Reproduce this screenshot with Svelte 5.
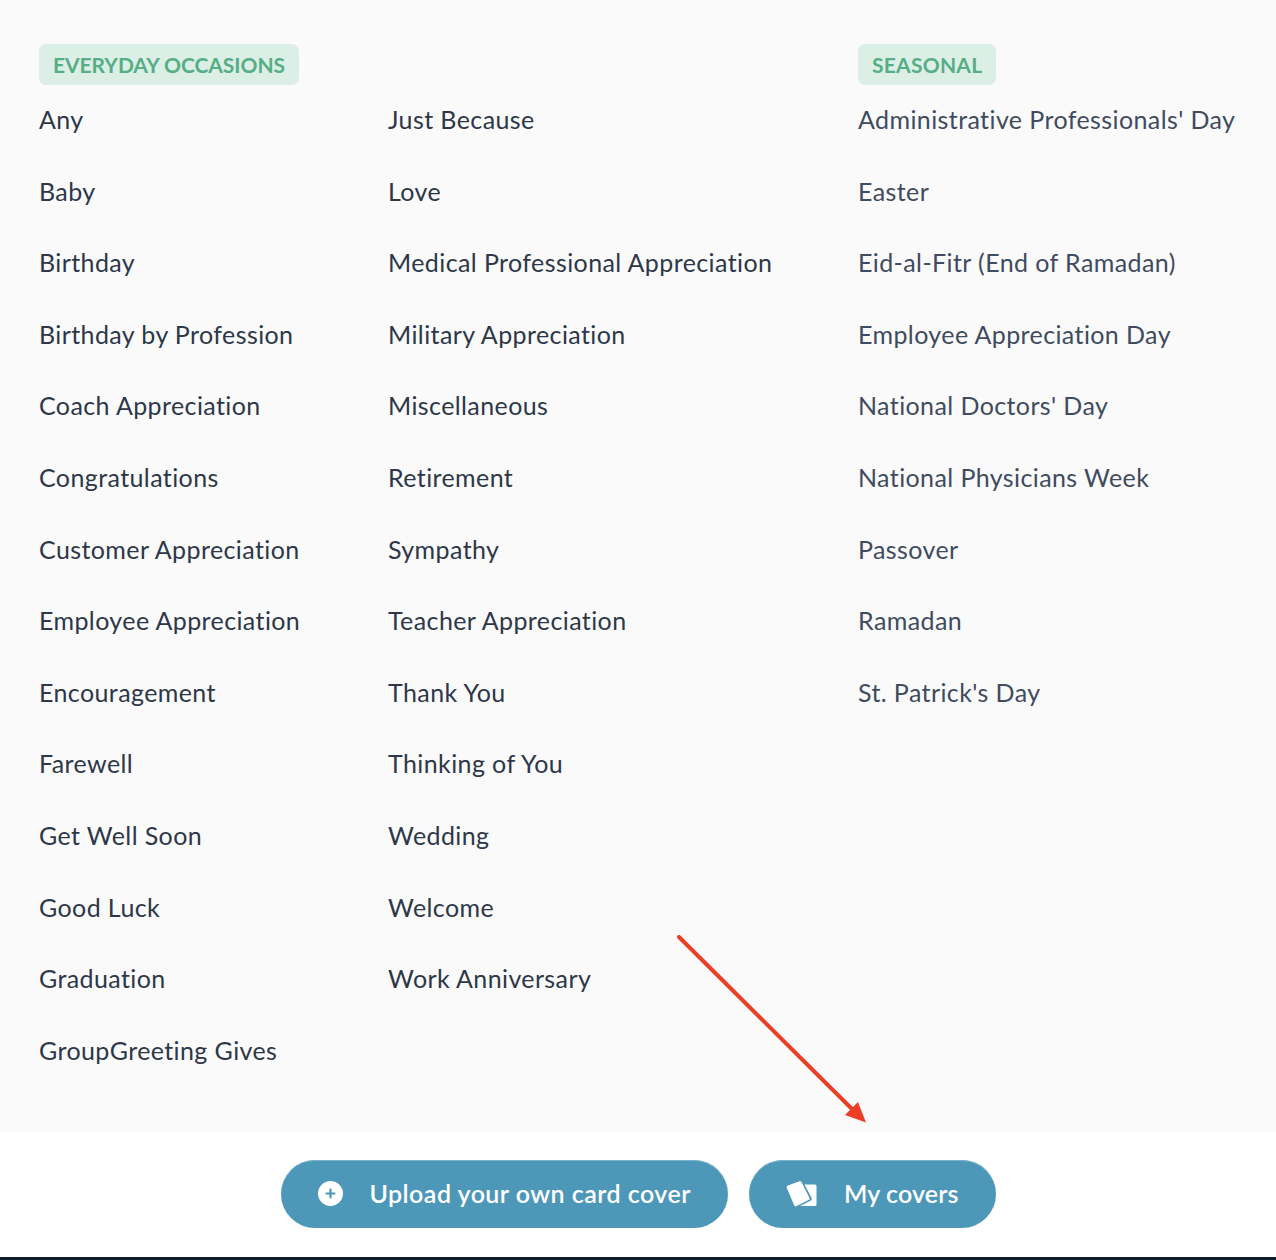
<script>
  const everyday = [
    ['Any', 'Baby', 'Birthday', 'Birthday by Profession', 'Coach Appreciation', 'Congratulations', 'Customer Appreciation', 'Employee Appreciation', 'Encouragement', 'Farewell', 'Get Well Soon', 'Good Luck', 'Graduation', 'GroupGreeting Gives'],
    ['Just Because', 'Love', 'Medical Professional Appreciation', 'Military Appreciation', 'Miscellaneous', 'Retirement', 'Sympathy', 'Teacher Appreciation', 'Thank You', 'Thinking of You', 'Wedding', 'Welcome', 'Work Anniversary']
  ];
  const seasonal = ['Administrative Professionals\' Day', 'Easter', 'Eid-al-Fitr (End of Ramadan)', 'Employee Appreciation Day', 'National Doctors\' Day', 'National Physicians Week', 'Passover', 'Ramadan', 'St. Patrick\'s Day'];
</script>

<div class="page">
  <main class="occasions">
    <section class="everyday">
      <span class="badge">EVERYDAY OCCASIONS</span>
      <div class="columns">
        {#each everyday as col, i}
          <ul class={i === 0 ? 'first' : 'second'}>
            {#each col as item}
              <li>{item}</li>
            {/each}
          </ul>
        {/each}
      </div>
    </section>
    <section class="seasonal">
      <span class="badge">SEASONAL</span>
      <ul>
        {#each seasonal as item}
          <li>{item}</li>
        {/each}
      </ul>
    </section>
  </main>

  <footer>
    <button class="upload">
      <svg width="25" height="25" viewBox="0 0 25 25">
        <circle cx="12.5" cy="12.5" r="12.5" fill="#fff" />
        <path d="M12.5 8.500v8M8.500 12.5h8" stroke="#4d98b8" stroke-width="2.200" stroke-linecap="round" />
      </svg>
      <span>Upload your own card cover</span>
    </button>
    <button class="covers">
      <svg width="32" height="26" viewBox="0 0 32 26">
        <path d="M18.500 3.500H29a1.500 1.500 0 0 1 1.500 1.500v18.500a1.500 1.500 0 0 1-1.500 1.500H14l10.500-5.300c1.200-.6 1.600-1.800 1-3z" fill="#fff" />
        <path d="M2.500 6.300 14 2l7.800 15.500L9.800 23.500z" fill="#fff" stroke="#fff" stroke-width="3.600" stroke-linejoin="round" />
      </svg>
      <span>My covers</span>
    </button>
  </footer>
  <div class="bar"></div>

  <svg class="arrow" width="200" height="200" viewBox="0 0 200 200">
    <path d="M2 2 L176 175" stroke="#ea3f24" stroke-width="4" stroke-linecap="round" fill="none" />
    <path d="M189 187.500 L181 167 L168 180 Z" fill="#ea3f24" />
  </svg>
</div>

<style>
  :global(body) {
    margin: 0;
    background: #fff;
  }

  .page {
    position: relative;
    display: flex;
    flex-direction: column;
    height: 1260px;
    font-family: Lato, "Noto Sans", sans-serif;
    font-variant-ligatures: none;
    overflow: hidden;
  }

  .occasions {
    flex: 1;
    display: flex;
    background: #fafafa;
    padding: 44px 0 0 39px;
  }

  .everyday {
    width: 819px;
  }

  .columns {
    display: flex;
  }

  .first {
    width: 349px;
    color: #2d3748;
  }

  .second {
    color: #2d3748;
  }

  .seasonal {
    color: #3f4b5e;
  }

  ul {
    list-style: none;
    margin: 0;
    padding: 0;
  }

  li {
    height: 71.62px;
    line-height: 69px;
    font-size: 25px;
    letter-spacing: 0.4px;
    white-space: nowrap;
  }

  .badge {
    display: inline-block;
    height: 41px;
    line-height: 41px;
    padding: 0 14px;
    border-radius: 7px;
    background: #dcefe7;
    color: #55ae84;
    font-size: 21px;
    font-weight: 700;
    letter-spacing: -0.05px;
    vertical-align: top;
  }

  .seasonal .badge {
    letter-spacing: 0.25px;
  }

  footer {
    height: 125px;
    box-sizing: border-box;
    padding-top: 28px;
    padding-left: 1px;
    display: flex;
    justify-content: center;
    gap: 21px;
    background: #fff;
  }

  button {
    display: flex;
    align-items: center;
    gap: 26px;
    height: 68px;
    border: none;
    border-radius: 34px;
    background: #4d98b8;
    box-shadow: inset 0 1px 0 #7db3cc;
    color: #fff;
    font-family: inherit;
    font-size: 25px;
    font-weight: 600;
    line-height: 1;
    padding: 0 37px 1px;
  }

  .upload span {
    letter-spacing: 0.46px;
  }

  .covers span {
    letter-spacing: 0.12px;
  }

  .bar {
    height: 3px;
    background: #0d1c2e;
  }

  .arrow {
    position: absolute;
    left: 677px;
    top: 935px;
  }
</style>
